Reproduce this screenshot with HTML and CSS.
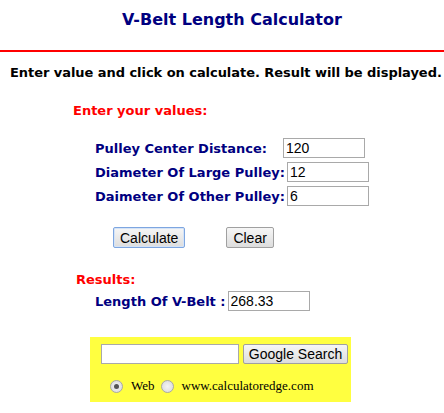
FILE: index.html
```html
<!DOCTYPE html>
<html lang="en">
<head>
  <meta charset="UTF-8" />
  <title>V-Belt Length Calculator</title>
  <link rel="stylesheet" href="styles.css">
</head>
<body>

  <h1 class="title">V-Belt Length Calculator</h1>
  <hr class="red-line" />

  <p class="intro">Enter value and click on calculate. Result will be displayed.</p>

  <div class="calc">
    <h2 class="section-head">Enter your values:</h2>

    <div class="fields">
      <div class="field first">
        <label for="centerDist">Pulley Center Distance:</label>
        <input type="text" id="centerDist" value="120" />
      </div>
      <div class="field">
        <label for="largeDia">Diameter Of Large Pulley:</label>
        <input type="text" id="largeDia" value="12" />
      </div>
      <div class="field">
        <label for="otherDia">Daimeter Of Other Pulley:</label>
        <input type="text" id="otherDia" value="6" />
      </div>
    </div>

    <div class="buttons">
      <button id="calcBtn" class="btn focused" onclick="calculate()">Calculate</button>
      <button id="clearBtn" class="btn" onclick="clearAll()">Clear</button>
    </div>

    <h2 class="section-head results-head">Results:</h2>
    <div class="field result">
      <label for="beltLen">Length Of V-Belt :</label>
      <input type="text" id="beltLen" value="268.33" />
    </div>

    <div class="search-box">
      <div class="search-row">
        <input type="text" class="search-input" />
        <button class="btn search-btn">Google Search</button>
      </div>
      <div class="radio-row">
        <span class="radio checked"></span>
        <span class="radio-label">Web</span>
        <span class="radio"></span>
        <span class="radio-label">www.calculatoredge.com</span>
      </div>
    </div>
  </div>

  <script>
    // L = 2C + pi/2 (D + d) + (D - d)^2 / 4C
    function calculate() {
      const c = parseFloat(document.getElementById("centerDist").value);
      const big = parseFloat(document.getElementById("largeDia").value);
      const small = parseFloat(document.getElementById("otherDia").value);
      if (isNaN(c) || isNaN(big) || isNaN(small)) return;
      const len = 2 * c + Math.PI / 2 * (big + small) + Math.pow(big - small, 2) / (4 * c);
      document.getElementById("beltLen").value = len.toFixed(2);
    }

    function clearAll() {
      ["centerDist", "largeDia", "otherDia", "beltLen"].forEach(id => {
        document.getElementById(id).value = "";
      });
    }
  </script>

</body>
</html>
```

FILE: styles.css
```css
body {
  margin: 0;
  background-color: white;
  font-family: Verdana, "DejaVu Sans", sans-serif;
  color: black;
}

.title {
  margin: 0;
  padding: 10px 0 0 20px;
  height: 40px;
  text-align: center;
  font-size: 16px;
  color: #000080;
}

.red-line {
  margin: 0;
  border: none;
  height: 2px;
  background-color: red;
}

.intro {
  margin: 13px 0 0 10px;
  font-size: 13px;
  font-weight: bold;
  letter-spacing: -0.05px;
  white-space: nowrap;
}

.calc {
  padding-left: 73px;
}

.section-head {
  margin: 23px 0 0 0;
  font-size: 13px;
  color: red;
}

.fields {
  margin-top: 20px;
  padding-left: 22px;
  display: flex;
  flex-direction: column;
  gap: 4px;
}

.field {
  display: flex;
  align-items: center;
  gap: 2px;
}

.field label {
  font-size: 13px;
  font-weight: bold;
  color: #000080;
}

.field.first label {
  width: 186px;
}

.field input,
.search-input {
  width: 76px;
  height: 16px;
  padding: 1px 2px;
  border: 1px solid #a9a9a9;
  font-family: Arial, "Liberation Sans", sans-serif;
  font-size: 14px;
  color: black;
}

.buttons {
  margin: 21px 0 0 40px;
  display: flex;
  gap: 41px;
}

.btn {
  height: 21px;
  padding: 0 6px;
  font-family: Arial, "Liberation Sans", sans-serif;
  font-size: 14px;
  color: black;
  white-space: nowrap;
  background: linear-gradient(#f6f6f6, #dddddd);
  border: 1px solid #a0a0a0;
  border-radius: 2px;
}

.btn.focused {
  border-color: #7ea6e0;
  box-shadow: inset 0 0 0 1px #d4e3f7;
}

.results-head {
  margin: 24px 0 0 3px;
}

.result {
  margin-top: 4px;
  padding-left: 22px;
}

.search-box {
  margin: 26px 0 0 17px;
  width: 261px;
  height: 65px;
  background-color: #ffff40;
  box-sizing: border-box;
  padding: 7px 0 0 11px;
}

.search-row {
  display: flex;
  gap: 4px;
}

.search-input {
  width: 132px;
  background: white;
}

.search-btn {
  height: 20px;
  width: 105px;
  padding: 0;
  font-size: 14px;
}

.radio-row {
  margin: 14px 0 0 9px;
  display: flex;
  align-items: center;
  font-family: "Times New Roman", "Liberation Serif", serif;
  font-size: 13px;
}

.radio {
  width: 11px;
  height: 11px;
  border-radius: 50%;
  border: 1px solid #a8a8a8;
  background: radial-gradient(circle, #f4f4f4, #d8d8d8);
  position: relative;
}

.radio.checked::after {
  content: "";
  position: absolute;
  left: 3px;
  top: 3px;
  width: 5px;
  height: 5px;
  border-radius: 50%;
  background-color: #555;
}

.radio-label {
  margin: 0 6px 0 8px;
}
```
